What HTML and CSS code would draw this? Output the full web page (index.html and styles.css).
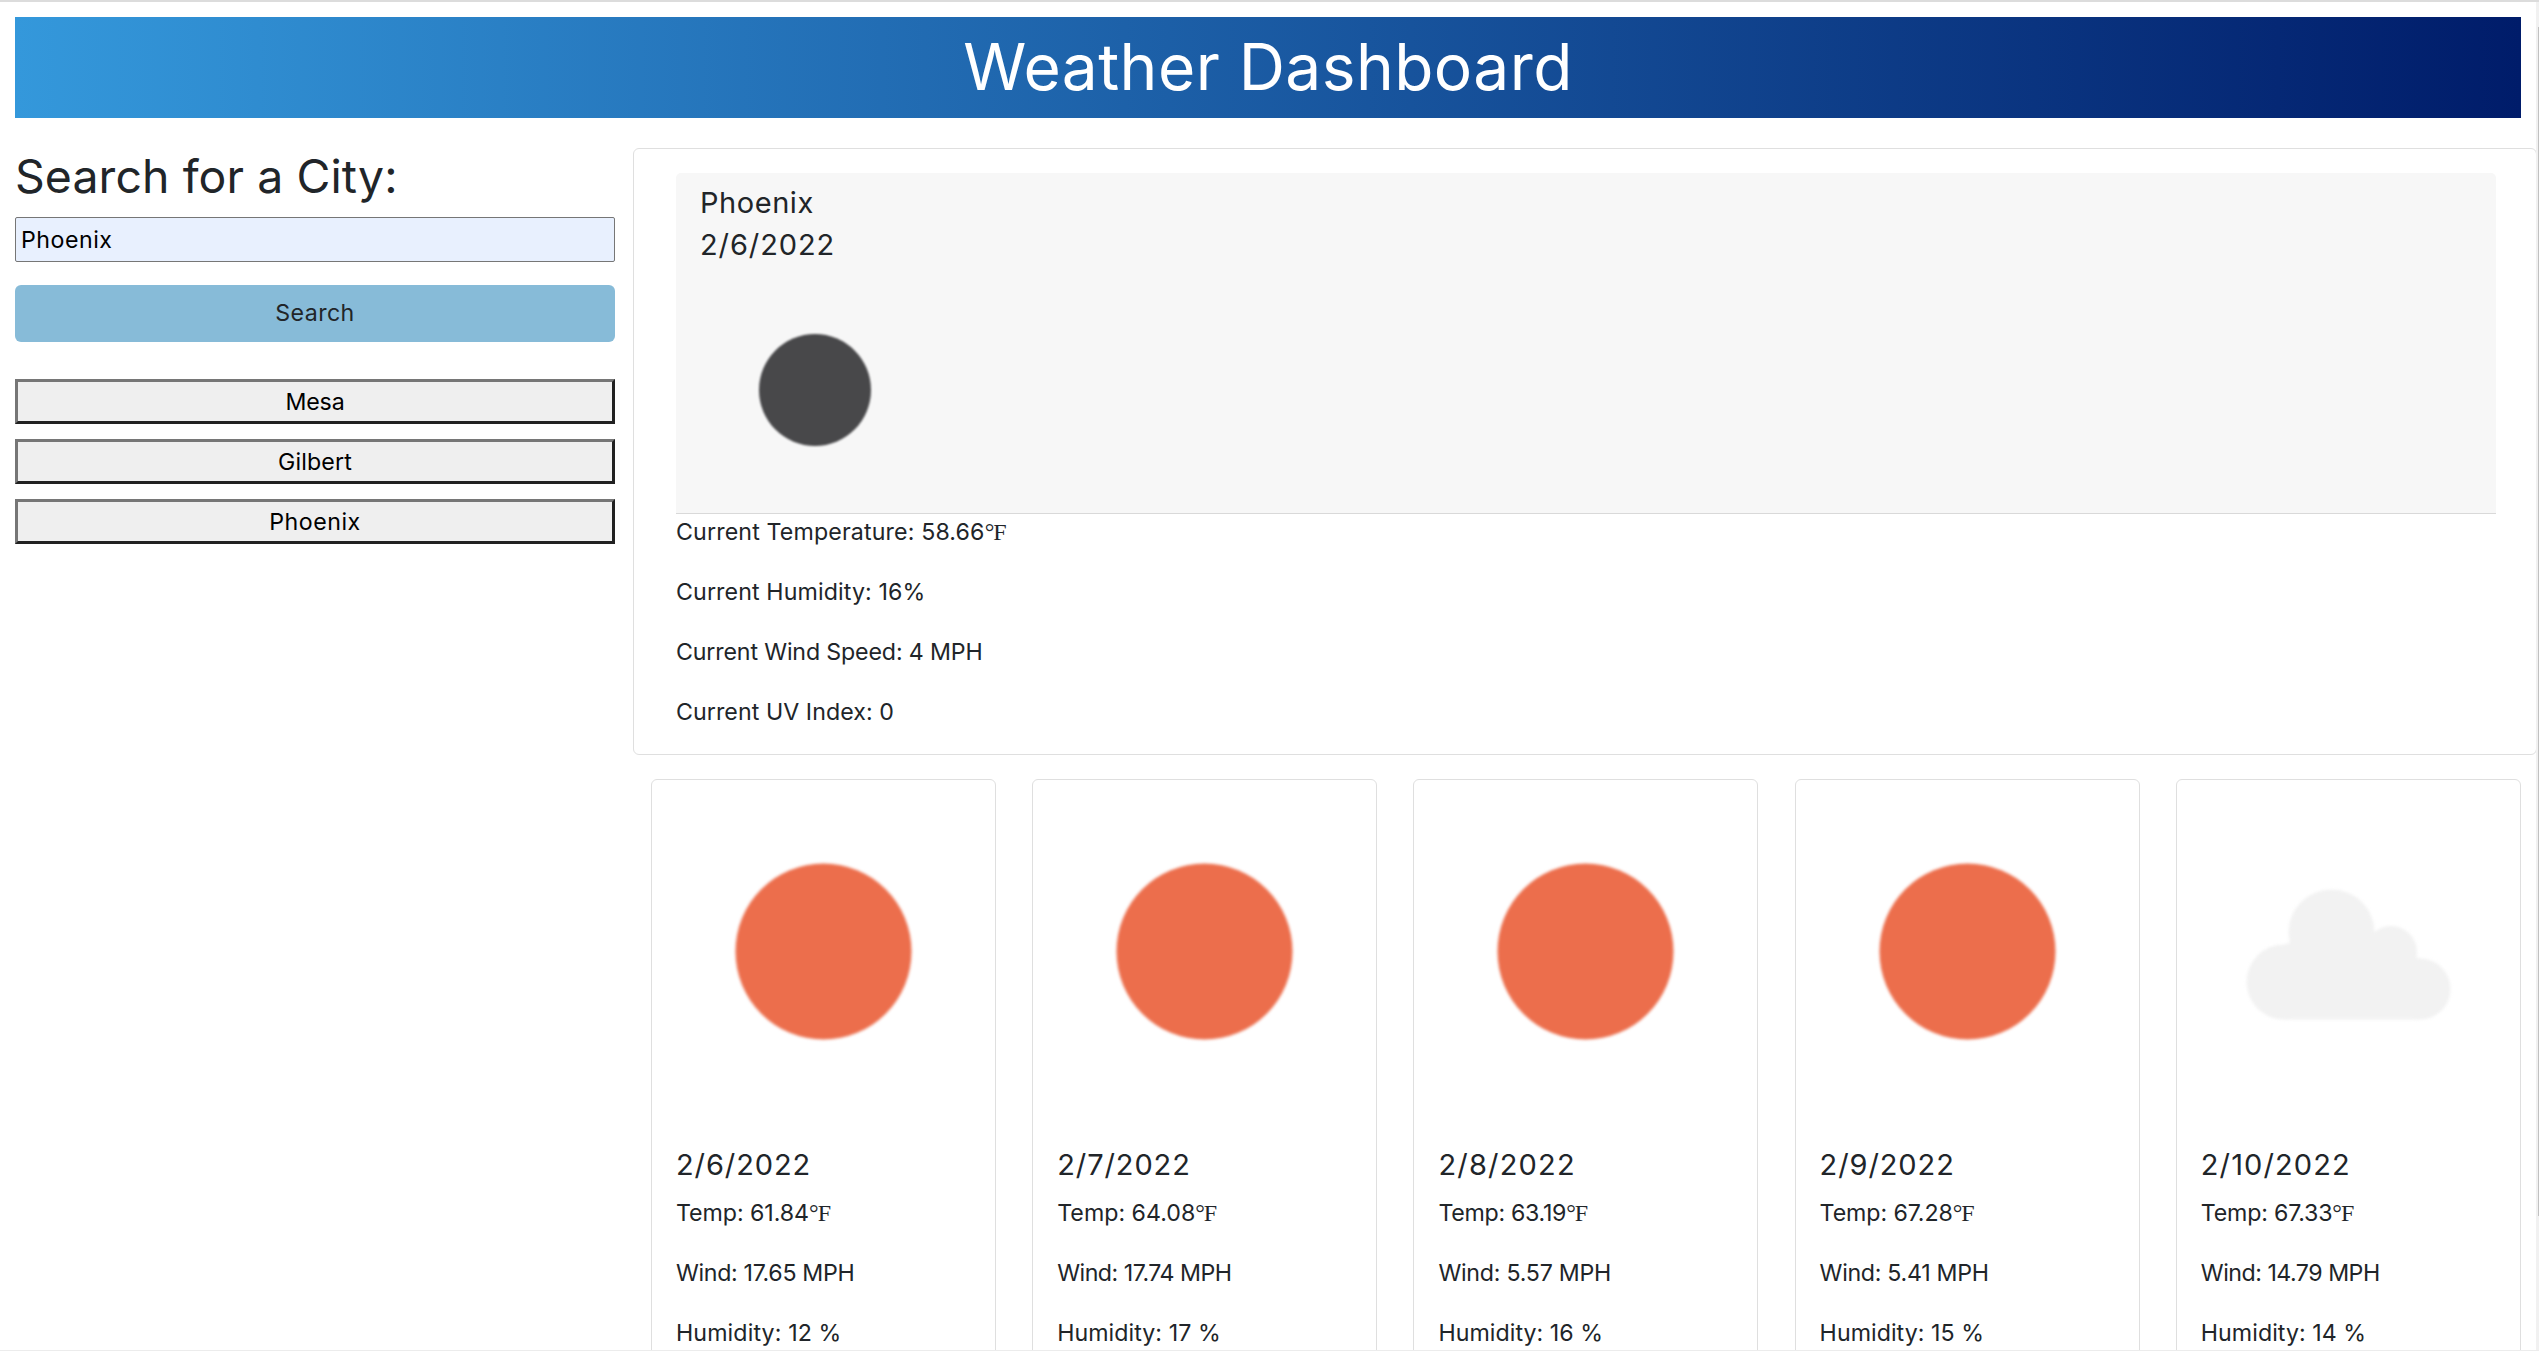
FILE: index.html
```html
<!DOCTYPE html>
<html lang="en">
<head>
<meta charset="utf-8">
<title>Weather Dashboard</title>
<link rel="stylesheet" href="styles.css">
</head>
<body>
<svg class="defs" width="0" height="0" aria-hidden="true">
  <symbol id="sun" viewBox="0 0 295 295">
    <circle cx="147.500" cy="147.500" r="88" fill="#ec6e4c"/>
  </symbol>
  <symbol id="cloud" viewBox="0 0 295 295">
    <g fill="#f2f2f2">
      <circle cx="83" cy="178" r="37.500"/>
      <circle cx="130.500" cy="128.500" r="43"/>
      <circle cx="190" cy="148" r="26"/>
      <circle cx="219" cy="185" r="30.500"/>
      <polygon points="83,140.500 130,128 190,148 219,154.500 219,215.500 83,215.500"/>
    </g>
  </symbol>
</svg>
<header class="banner"><h1>Weather Dashboard</h1></header>
<main class="page">
  <aside class="sidebar">
    <h2>Search for a City:</h2>
    <input class="city-input" type="text" value="Phoenix">
    <button class="search-btn" type="button">Search</button>
    <div class="history">
      <button class="mesa" type="button">Mesa</button>
      <button class="gilbert" type="button">Gilbert</button>
      <button class="phoenix" type="button">Phoenix</button>
    </div>
  </aside>
  <div class="results">
    <section class="current">
      <div class="current-head">
        <div class="city">Phoenix</div>
        <div class="today">2/6/2022</div>
        <svg class="moon" viewBox="0 0 150 150"><circle cx="75" cy="75" r="56" fill="#48484a"/></svg>
      </div>
      <p class="now-temp">Current Temperature: 58.66<span class="unit">°F</span></p>
      <p class="now-humidity">Current Humidity: 16%</p>
      <p class="now-wind">Current Wind Speed: 4 MPH</p>
      <p class="now-uv">Current UV Index: 0</p>
    </section>
    <section class="forecast">
      <article class="day day-1">
        <svg class="icon"><use href="#sun"/></svg>
        <h5>2/6/2022</h5>
        <p class="temp">Temp: 61.84<span class="unit">°F</span></p>
        <p class="wind">Wind: 17.65 MPH</p>
        <p class="humidity">Humidity: 12 %</p>
      </article>
      <article class="day day-2">
        <svg class="icon"><use href="#sun"/></svg>
        <h5>2/7/2022</h5>
        <p class="temp">Temp: 64.08<span class="unit">°F</span></p>
        <p class="wind">Wind: 17.74 MPH</p>
        <p class="humidity">Humidity: 17 %</p>
      </article>
      <article class="day day-3">
        <svg class="icon"><use href="#sun"/></svg>
        <h5>2/8/2022</h5>
        <p class="temp">Temp: 63.19<span class="unit">°F</span></p>
        <p class="wind">Wind: 5.57 MPH</p>
        <p class="humidity">Humidity: 16 %</p>
      </article>
      <article class="day day-4">
        <svg class="icon"><use href="#sun"/></svg>
        <h5>2/9/2022</h5>
        <p class="temp">Temp: 67.28<span class="unit">°F</span></p>
        <p class="wind">Wind: 5.41 MPH</p>
        <p class="humidity">Humidity: 15 %</p>
      </article>
      <article class="day day-5">
        <svg class="icon"><use href="#cloud"/></svg>
        <h5>2/10/2022</h5>
        <p class="temp">Temp: 67.33<span class="unit">°F</span></p>
        <p class="wind">Wind: 14.79 MPH</p>
        <p class="humidity">Humidity: 14 %</p>
      </article>
    </section>
  </div>
</main>
<div class="scroll-track"><div class="scroll-thumb"></div></div>
<div class="bottom-edge"></div>
</body>
</html>
```
FILE: styles.css
```css
* { box-sizing: border-box; }

html, body { height: 1351px; overflow: hidden; }

body {
  margin: 0;
  border-top: 2px solid #dcdcdc;
  background: #fff;
  color: #212529;
  font: 23.2px/36px Inter, "Liberation Sans", sans-serif;
}

h1, h2, h5, p { margin: 0; font-weight: 400; }

button, input { font: inherit; color: #000; display: block; width: 100%; }

.defs { display: block; height: 0; }

.banner {
  margin: 15px 18px 0 15px;
  height: 101px;
  background: linear-gradient(to right, #3498db, #001c6a);
  text-align: center;
}

.banner h1 {
  font-size: 64px;
  line-height: 100px;
  letter-spacing: .45px;
  color: #fff;
}

.page { display: flex; gap: 18px; padding: 30px 3px 0 15px; }

/* Search column */
.sidebar { flex: 0 0 600px; }

.sidebar h2 {
  font-size: 46.4px;
  line-height: 57px;
  letter-spacing: .1px;
  margin-bottom: 12px;
}

.city-input {
  height: 45px;
  padding: 1px 5px;
  border: 1px solid #767676;
  border-radius: 2px;
  background: #e8f0fe;
  letter-spacing: .51px;
}

.search-btn {
  height: 57px;
  margin-top: 23px;
  padding: 0 0 2px;
  border: 0;
  border-radius: 6px;
  background: #87bbd8;
  color: #212529;
  letter-spacing: .43px;
}

.history { display: grid; gap: 15px; margin-top: 37px; }

.history button {
  height: 45px;
  padding: 0;
  border: 3px solid;
  border-color: #767676 #212121 #212121 #767676;
  background: #efefef;
}

.mesa { letter-spacing: -.12px; }
.gilbert { letter-spacing: .15px; }
.phoenix { letter-spacing: .51px; }

/* Current conditions */
.results { flex: 1; min-width: 0; }

.current {
  height: 607px;
  margin-right: -1px;
  padding: 24px 40px 0 42px;
  border: 1px solid #dfdfdf;
  border-radius: 6px;
}

.current-head {
  height: 341px;
  padding: 9px 24px 0;
  border-bottom: 1px solid #d9d9d9;
  border-radius: 5px 5px 0 0;
  background: #f7f7f7;
}

.current-head div { font-size: 29px; line-height: 42px; }
.city { letter-spacing: .55px; }
.today { letter-spacing: .9px; }
.moon { display: block; width: 150px; height: 150px; margin: 49px 0 0 40px; filter: blur(.8px); }
.current p { margin-bottom: 24px; }

.now-temp { letter-spacing: .14px; }
.now-humidity { letter-spacing: .12px; }
.now-wind { letter-spacing: -.15px; }
.now-uv { letter-spacing: .06px; }

.unit { font-family: "Liberation Serif", serif; font-size: 24px; letter-spacing: -1px; line-height: 1; }

/* Five day forecast */
.forecast {
  display: grid;
  grid-template-columns: repeat(5, 345px);
  justify-content: space-between;
  padding: 24px 15.2px 0 18px;
}

.day {
  height: 640px;
  padding: 24px 24px 0;
  border: 1px solid #dfdfdf;
  border-radius: 6px;
}

.icon { display: block; width: 295px; height: 295px; filter: blur(1.4px); }
.day h5 { margin: 48px 0 12px; font-size: 29px; line-height: 36px; letter-spacing: .9px; }
.day p { margin-bottom: 24px; }
.humidity { letter-spacing: .05px; }

.day-1 .temp { letter-spacing: -.06px; }
.day-1 .wind { letter-spacing: -.33px; }
.day-1 .humidity { letter-spacing: .12px; }
.day-2 .wind { letter-spacing: -.5px; }
.day-3 h5 { letter-spacing: 1.2px; }
.day-3 .temp { letter-spacing: -.3px; }
.day-3 .wind { letter-spacing: -.25px; }
.day-4 .temp { letter-spacing: -.1px; }
.day-4 .wind { letter-spacing: -.3px; }
.day-5 h5 { letter-spacing: 1.1px; }
.day-5 .temp { letter-spacing: -.2px; }
.day-5 .wind { letter-spacing: -.5px; }

.day .unit { letter-spacing: -1px; }

/* Window edges */
.scroll-track {
  position: absolute;
  top: 2px;
  right: 0;
  width: 3px;
  height: 1349px;
  padding: 25px 0 0 2px;
  background: #f1f1f1;
}

.scroll-thumb { height: 1189px; background: #c1c1c1; }

.bottom-edge {
  position: absolute;
  top: 1350px;
  left: 0;
  width: 2539px;
  height: 1px;
  background: #ececec;
}
```
